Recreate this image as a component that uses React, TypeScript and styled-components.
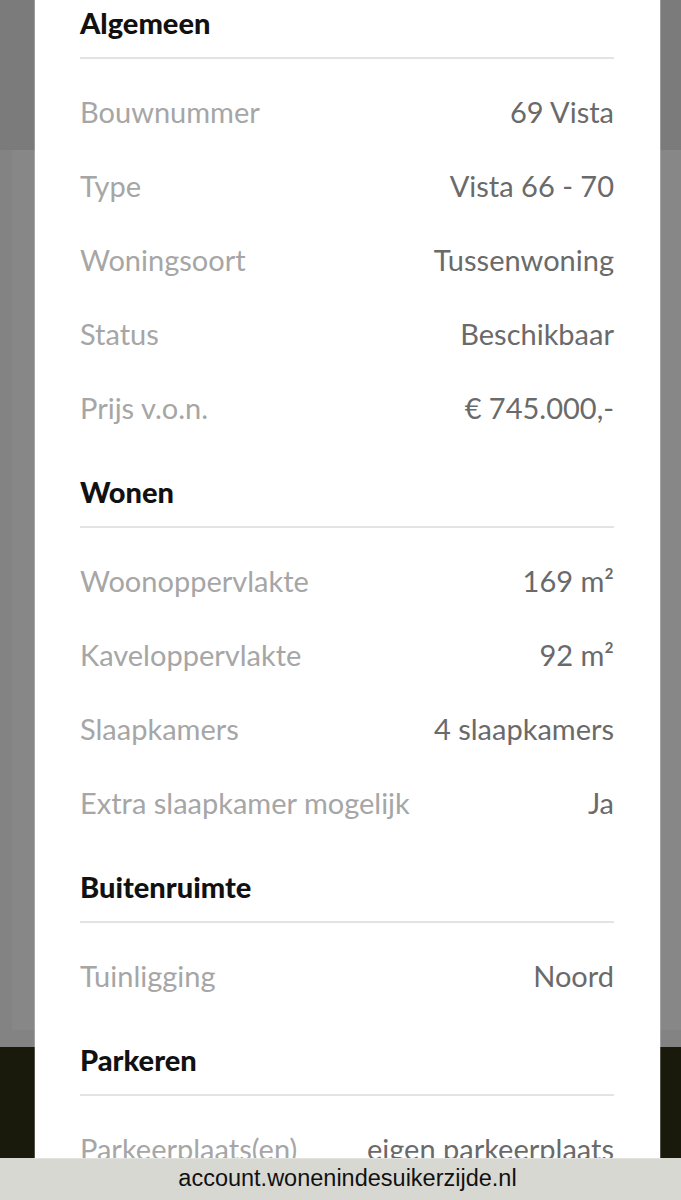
import React from 'react';
import styled, { createGlobalStyle } from 'styled-components';

const GlobalStyle = createGlobalStyle`
  html, body {
    margin: 0;
    padding: 0;
    background: #7b7b7b;
  }
  * {
    box-sizing: border-box;
  }
`;

const Screen = styled.div`
  position: relative;
  width: 681px;
  height: 1200px;
  overflow: hidden;
  display: flex;
  flex-direction: column;
  font-family: Lato, 'Noto Sans', sans-serif;
`;

const TopBand = styled.div`
  height: 150px;
  background: #7b7b7b;
`;

const MidBand = styled.div`
  height: 897px;
  background: #838383;
  padding: 0 0 17px 12px;
  display: flex;
`;

const MidCard = styled.div`
  flex: 1;
  background: #878787;
`;

const DarkBand = styled.div`
  flex: 1;
  background: #1a1a0c;
`;

const UrlBar = styled.div`
  height: 42px;
  background: #d8d8d3;
  display: flex;
  align-items: center;
  justify-content: center;
  padding: 0 0 2px 14px;
  font-family: 'Liberation Sans', Arial, sans-serif;
  font-size: 23.5px;
  color: #111;
`;

// the modal sheet lies over the backdrop
const Sheet = styled.div`
  position: absolute;
  top: 0;
  left: 35px;
  right: 21px;
  bottom: 42px;
  background: #fff;
  overflow: hidden;
  padding: 3px 46px 0 45px;
  box-shadow: 0 0 0 1px rgba(255, 255, 255, 0.25);
`;

const Section = styled.section`
  & + & {
    margin-top: 28px;
  }
`;

const Heading = styled.h2`
  margin: 0;
  font-size: 29px;
  line-height: 40px;
  font-weight: 900;
  color: #111;
  padding-bottom: 14px;
  border-bottom: 2px solid #e3e3e3;
`;

const Rows = styled.dl`
  margin: 0;
  padding-top: 15px;
`;

const Row = styled.div`
  height: 74px;
  display: flex;
  align-items: center;
  justify-content: space-between;
  font-size: 29px;
`;

const Label = styled.dt`
  color: #a6a6a6;
`;

const Value = styled.dd`
  margin: 0;
  color: #6a6a6a;
  text-align: right;
`;

type Item = [string, string];

const sections: { title: string; items: Item[] }[] = [
  {
    title: 'Algemeen',
    items: [
      ['Bouwnummer', '69 Vista'],
      ['Type', 'Vista 66 - 70'],
      ['Woningsoort', 'Tussenwoning'],
      ['Status', 'Beschikbaar'],
      ['Prijs v.o.n.', '€ 745.000,-'],
    ],
  },
  {
    title: 'Wonen',
    items: [
      ['Woonoppervlakte', '169 m²'],
      ['Kaveloppervlakte', '92 m²'],
      ['Slaapkamers', '4 slaapkamers'],
      ['Extra slaapkamer mogelijk', 'Ja'],
    ],
  },
  {
    title: 'Buitenruimte',
    items: [['Tuinligging', 'Noord']],
  },
  {
    title: 'Parkeren',
    items: [['Parkeerplaats(en)', 'eigen parkeerplaats']],
  },
];

export default function App() {
  return (
    <Screen>
      <GlobalStyle />
      <TopBand />
      <MidBand>
        <MidCard />
      </MidBand>
      <DarkBand />
      <UrlBar>account.wonenindesuikerzijde.nl</UrlBar>
      <Sheet>
        {sections.map((section) => (
          <Section key={section.title}>
            <Heading>{section.title}</Heading>
            <Rows>
              {section.items.map(([label, value]) => (
                <Row key={label}>
                  <Label>{label}</Label>
                  <Value>{value}</Value>
                </Row>
              ))}
            </Rows>
          </Section>
        ))}
      </Sheet>
    </Screen>
  );
}
